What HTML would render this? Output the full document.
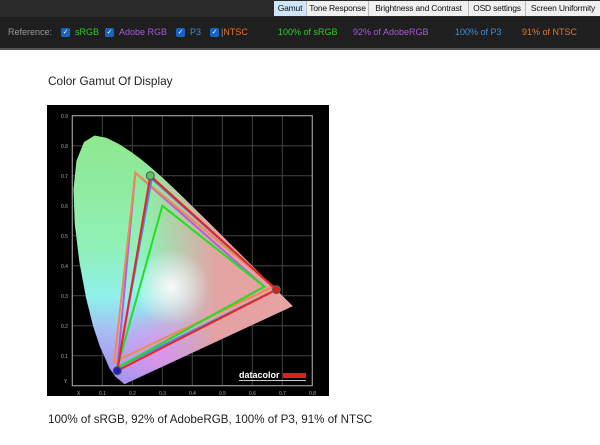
<!DOCTYPE html><html><head><style>
body{margin:0;width:600px;height:445px;background:#fff;font-family:"Liberation Sans",sans-serif;position:relative;overflow:hidden}
.a{position:absolute;white-space:nowrap}
.top{position:absolute;left:0;top:0;width:600px;height:17px;background:#2a2a2a}
.tab{position:absolute;top:1px;height:15px;background:#f0f0f0;border-right:1px solid #bbb;font-size:8.5px;line-height:15px;text-align:center;color:#111;white-space:nowrap;overflow:hidden;letter-spacing:-0.2px}
.bar{position:absolute;left:0;top:17px;width:600px;height:31px;background:#1f1f1f;border-bottom:2px solid #555}
.cb{position:absolute;top:28px;width:9px;height:9px;background:#1565c0;border-radius:2px;color:#fff;font-size:7px;line-height:9px;text-align:center}
.t{position:absolute;top:27px;font-size:9px;white-space:nowrap}
</style></head><body>
<div class="top"></div>
<div class="tab" style="left:274px;width:32px;background:#cfe6fb">Gamut</div>
<div class="tab" style="left:307px;width:61px">Tone Response</div>
<div class="tab" style="left:369px;width:99px">Brightness and Contrast</div>
<div class="tab" style="left:469px;width:56px">OSD settings</div>
<div class="tab" style="left:526px;width:74px">Screen Uniformity</div>
<div class="bar"></div>
<div class="t" style="left:8px;color:#999">Reference:</div>
<div class="cb" style="left:61px">✓</div><div class="t" style="left:75px;color:#2ecc2e">sRGB</div>
<div class="cb" style="left:105px">✓</div><div class="t" style="left:119px;color:#a35bd8">Adobe RGB</div>
<div class="cb" style="left:176px">✓</div><div class="t" style="left:190px;color:#3d8fd8">P3</div>
<div class="cb" style="left:210px">✓</div><div class="t" style="left:221px;color:#e8742e"><span style="color:#999">|</span>NTSC</div>
<div class="t" style="left:278px;color:#2ecc2e">100% of sRGB</div>
<div class="t" style="left:353px;color:#a35bd8">92% of AdobeRGB</div>
<div class="t" style="left:455px;color:#3d8fd8">100% of P3</div>
<div class="t" style="left:522px;color:#e8742e">91% of NTSC</div>
<div class="a" style="left:48px;top:74px;font-size:11.8px;color:#222">Color Gamut Of Display</div>
<svg class="a" style="left:47px;top:105px" width="282" height="291" viewBox="0 0 282 291">
<defs>
<linearGradient id="v" x1="0" y1="0" x2="0" y2="1"><stop offset="0" stop-color="#8de88d"/><stop offset=".45" stop-color="#90f0b8"/><stop offset=".65" stop-color="#8ff0ec"/><stop offset=".8" stop-color="#a8b8f4"/><stop offset="1" stop-color="#a090f0"/></linearGradient>
<linearGradient id="h" x1="0" y1="0" x2="1" y2="0"><stop offset=".35" stop-color="#e8a0a0" stop-opacity="0"/><stop offset=".6" stop-color="#e8a0a0" stop-opacity=".95"/><stop offset="1" stop-color="#eaa0a0"/></linearGradient>
<radialGradient id="w" cx=".5" cy=".5" r=".5"><stop offset="0" stop-color="#fff" stop-opacity=".9"/><stop offset="1" stop-color="#fff" stop-opacity="0"/></radialGradient>
<radialGradient id="p" cx=".5" cy=".5" r=".5"><stop offset="0" stop-color="#e890e8" stop-opacity=".8"/><stop offset="1" stop-color="#e890e8" stop-opacity="0"/></radialGradient>
<clipPath id="c"><path transform="translate(25.3,280.7) scale(300,-300)" d="M0.1741,0.005 L0.144,0.0297 0.1241,0.0578 0.0913,0.1327 0.0687,0.2007 0.0454,0.295 0.0235,0.4127 0.0082,0.5384 0.0039,0.6548 0.0139,0.7502 0.0389,0.812 0.0743,0.8338 0.1142,0.8262 0.1547,0.8059 0.1929,0.7816 0.2296,0.7543 0.2658,0.7243 0.3016,0.6923 0.3373,0.6589 0.3731,0.6245 0.4087,0.5896 0.4441,0.5547 0.4788,0.5202 0.5125,0.4866 0.5448,0.4544 0.5752,0.4242 0.6029,0.3965 0.627,0.3725 0.6482,0.3514 0.6658,0.334 0.6915,0.3083 0.7347,0.2653 Z"/></clipPath>
</defs>
<rect width="282" height="291" fill="#000"/>
<g stroke="#444" stroke-width="1">
<path d="M55.3 10V281M85.3 10V281M115.3 10V281M145.3 10V281M175.3 10V281M205.3 10V281M235.3 10V281M25.3 250.7H265.3M25.3 220.7H265.3M25.3 190.7H265.3M25.3 160.7H265.3M25.3 130.7H265.3M25.3 100.7H265.3M25.3 70.7H265.3M25.3 40.7H265.3"/>
</g>
<rect x="25.3" y="10.7" width="240" height="270" fill="none" stroke="#999" stroke-width="1.2"/>
<g font-size="5" fill="#aaa">
<text x="14" y="13">0.9</text><text x="14" y="43">0.8</text><text x="14" y="73">0.7</text><text x="14" y="103">0.6</text><text x="14" y="133">0.5</text><text x="14" y="163">0.4</text><text x="14" y="193">0.3</text><text x="14" y="223">0.2</text><text x="14" y="253">0.1</text><text x="17" y="278">Y</text>
<text x="30" y="290">X</text><text x="52" y="290">0.1</text><text x="82" y="290">0.2</text><text x="112" y="290">0.3</text><text x="142" y="290">0.4</text><text x="172" y="290">0.5</text><text x="202" y="290">0.6</text><text x="232" y="290">0.7</text><text x="262" y="290">0.8</text>
</g>
<g clip-path="url(#c)">
<rect x="0" y="30" width="282" height="250" fill="url(#v)"/>
<rect x="0" y="30" width="282" height="250" fill="url(#h)"/>
<ellipse cx="110" cy="250" rx="50" ry="45" fill="url(#p)"/>
<circle cx="124" cy="182" r="38" fill="url(#w)"/>
</g>
<g transform="translate(25.3,280.7) scale(300,-300)" fill="none">
<polygon points="0.64,0.33 0.21,0.71 0.15,0.06" stroke="#b060e0" vector-effect="non-scaling-stroke" stroke-width="2"/>
<polygon points="0.67,0.33 0.21,0.71 0.14,0.08" stroke="#f08a50" vector-effect="non-scaling-stroke" stroke-width="2"/>
<polygon points="0.68,0.32 0.265,0.69 0.15,0.06" stroke="#4090e0" vector-effect="non-scaling-stroke" stroke-width="2"/>
<polygon points="0.64,0.33 0.30,0.60 0.15,0.06" stroke="#20e020" vector-effect="non-scaling-stroke" stroke-width="2"/>
<polygon points="0.68,0.32 0.26,0.70 0.15,0.05" stroke="#f02020" vector-effect="non-scaling-stroke" stroke-width="2"/>
</g>
<circle cx="229.3" cy="184.7" r="4" fill="#d02020" stroke="#666" stroke-width="1"/>
<circle cx="103.3" cy="70.7" r="4" fill="#60c060" stroke="#555" stroke-width="1"/>
<circle cx="70.3" cy="265.7" r="4" fill="#2020c0" stroke="#555" stroke-width="1"/>
<text x="192" y="273" font-size="9" font-weight="bold" fill="#fff">datacolor</text>
<rect x="236" y="268" width="23" height="5" fill="#e02020"/>
<rect x="192" y="275" width="67" height="0.8" fill="#fff"/>
</svg>
<div class="a" style="left:48px;top:413px;font-size:11.6px;color:#222">100% of sRGB, 92% of AdobeRGB, 100% of P3, 91% of NTSC</div>
</body></html>
